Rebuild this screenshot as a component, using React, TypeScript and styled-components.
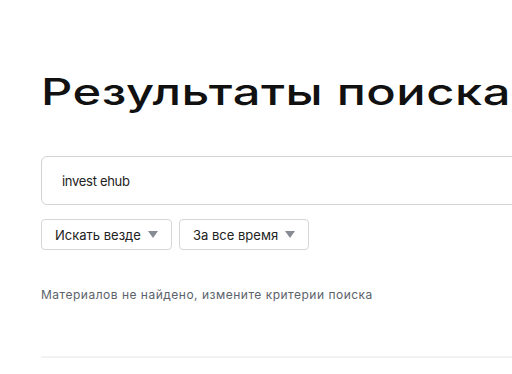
import styled, { createGlobalStyle } from "styled-components";

const GlobalStyle = createGlobalStyle`
  html, body {
    margin: 0;
    padding: 0;
    background: #fff;
    overflow: hidden;
  }
  body {
    font-family: Inter, "Noto Sans", sans-serif;
    color: #111;
  }
`;

const Page = styled.div`
  width: 640px;
  padding: 62px 0 0 41px;
  display: flex;
  flex-direction: column;
`;

// the original face is a wide geometric sans; Inter widened to match
const Title = styled.h1`
  margin: 0;
  width: max-content;
  font-size: 37px;
  line-height: 60px;
  font-weight: 500;
  letter-spacing: 0.4px;
  color: #111;
  white-space: nowrap;
  transform: scaleX(1.32);
  transform-origin: left center;
`;

const SearchBox = styled.div`
  margin-top: 34px;
  height: 49px;
  box-sizing: border-box;
  border: 1px solid #d3d3d3;
  border-radius: 6px;
  display: flex;
  align-items: center;
  padding: 0 20px;
  font-size: 13px;
  letter-spacing: -0.3px;
  color: #222;
`;

const Filters = styled.div`
  margin-top: 14px;
  display: flex;
  gap: 7px;
`;

const Select = styled.div<{ $width: number }>`
  width: ${(p) => p.$width}px;
  height: 31px;
  box-sizing: border-box;
  border: 1px solid #d6d6d6;
  border-radius: 4px;
  display: flex;
  align-items: center;
  justify-content: space-between;
  padding: 0 13px;
  font-size: 13px;
  color: #222;
`;

const Caret = styled.span`
  width: 0;
  height: 0;
  border-left: 5px solid transparent;
  border-right: 5px solid transparent;
  border-top: 7px solid #868b94;
`;

const Message = styled.p`
  margin: 37px 0 0;
  font-size: 12px;
  letter-spacing: 0.5px;
  color: #5b626b;
`;

const Divider = styled.hr`
  margin: 54px 0 0;
  border: none;
  height: 2px;
  background: #f2f2f2;
`;

export default function App() {
  return (
    <>
      <GlobalStyle />
      <Page>
        <Title>Результаты поиска</Title>
        <SearchBox>invest ehub</SearchBox>
        <Filters>
          <Select $width={131}>
            Искать везде
            <Caret />
          </Select>
          <Select $width={130}>
            За все время
            <Caret />
          </Select>
        </Filters>
        <Message>Материалов не найдено, измените критерии поиска</Message>
        <Divider />
      </Page>
    </>
  );
}
